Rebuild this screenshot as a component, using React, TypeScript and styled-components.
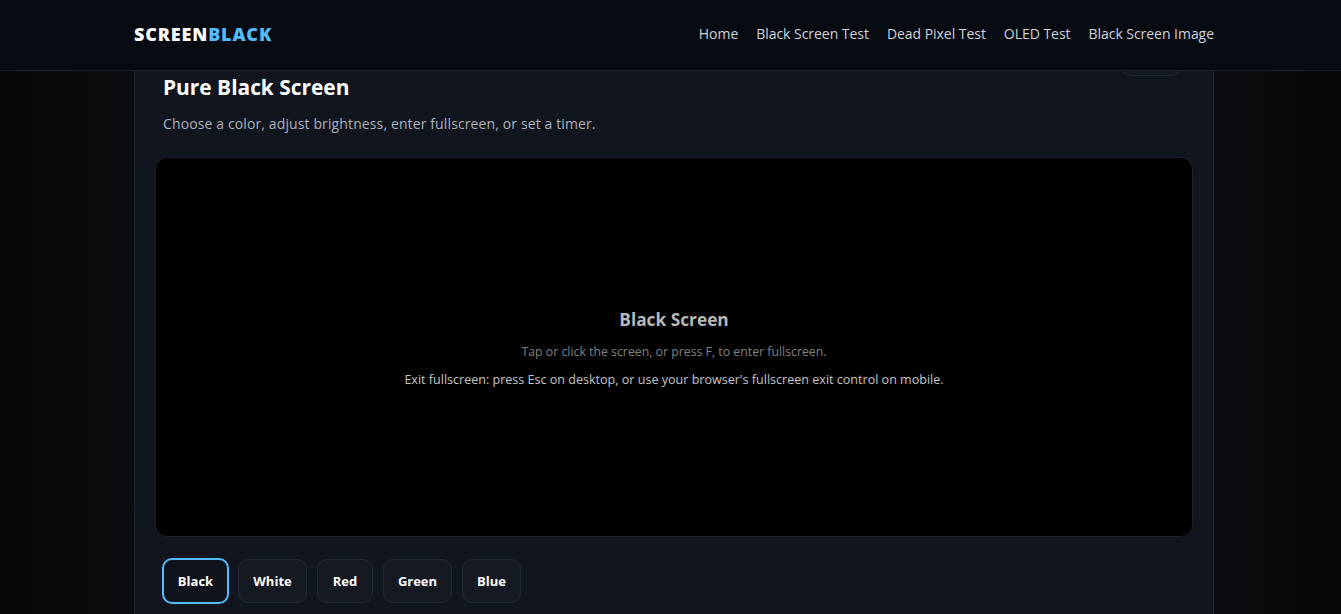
import styled, { createGlobalStyle } from 'styled-components';

const GlobalStyle = createGlobalStyle`
  * {
    box-sizing: border-box;
  }

  html,
  body {
    margin: 0;
    height: 100%;
    overflow: hidden;
    background: #000;
  }

  body {
    font-family: 'Open Sans', 'Noto Sans', sans-serif;
    color: #fff;
  }
`;

const Page = styled.div`
  height: 614px;
  overflow: hidden;
  background: linear-gradient(90deg, #07080a 0%, #0a0b0e 10%, #0a0b0e 92%, #060709 100%);
`;

const Header = styled.header`
  position: relative;
  z-index: 2;
  height: 71px;
  background: #060a11;
  border-bottom: 1px solid #1c212a;
`;

const HeaderInner = styled.div`
  width: 1080px;
  height: 100%;
  margin-left: 134px;
  display: flex;
  align-items: center;
  justify-content: space-between;
`;

const Logo = styled.a`
  padding-bottom: 3px;
  font-size: 18px;
  font-weight: 800;
  letter-spacing: 0.85px;
  color: #fff;
`;

const LogoAccent = styled.span`
  color: #55bcff;
`;

const Nav = styled.nav`
  display: flex;
  gap: 18px;
  padding-bottom: 4px;
`;

const NavLink = styled.a`
  font-size: 14px;
  letter-spacing: -0.04px;
  color: #cfd4dc;
`;

const Main = styled.main`
  width: 1080px;
  margin: -40px 0 0 134px;
`;

const Card = styled.section`
  height: 620px;
  padding: 6px 20px 0;
  background: #11151d;
  border: 1px solid #1f2530;
  border-radius: 16px;
`;

const CardHead = styled.div`
  display: flex;
  justify-content: space-between;
  align-items: flex-start;
  padding: 0 9px 0 8px;
`;

const TitleBlock = styled.div`
  padding-top: 35px;
`;

const Title = styled.h1`
  margin: 0;
  font-size: 20.9px;
  line-height: 28px;
  font-weight: 700;
  color: #fff;
`;

const Subtitle = styled.p`
  margin: 13px 0 0;
  font-size: 14px;
  line-height: 20px;
  letter-spacing: 0.12px;
  color: #aab2bf;
`;

const HeadButton = styled.button`
  width: 66px;
  height: 38px;
  padding: 0;
  background: #121720;
  border: 1px solid #222833;
  border-radius: 14px;
`;

const Screen = styled.div`
  height: 380px;
  margin-top: 23px;
  padding-top: 2px;
  display: flex;
  flex-direction: column;
  align-items: center;
  justify-content: center;
  background: #000;
  border: 1px solid #1c212a;
  border-radius: 12px;
  text-align: center;
`;

const ScreenTitle = styled.h2`
  margin: 0;
  font-size: 17.3px;
  line-height: 24px;
  font-weight: 700;
  color: #b8b8b8;
`;

const ScreenHint = styled.p`
  margin: 11px 0 0;
  font-size: 12.3px;
  line-height: 18px;
  color: #808080;
`;

const ScreenExit = styled.p`
  margin: 10px 0 0;
  font-size: 12.55px;
  line-height: 18px;
  font-weight: 500;
  color: #c4c4c4;
`;

const Swatches = styled.div`
  display: flex;
  align-items: center;
  gap: 10px;
  margin-top: 21px;
  padding-left: 7px;
`;

const Swatch = styled.button<{ $active?: boolean; $width: number }>`
  width: ${({ $width }) => $width}px;
  height: ${({ $active }) => ($active ? '46px' : '44px')};
  margin-right: ${({ $active }) => ($active ? '-1px' : '0')};
  padding: 0;
  font-family: inherit;
  font-size: 13px;
  font-weight: 700;
  color: #fff;
  background: ${({ $active }) => ($active ? '#0f141c' : '#141922')};
  border: ${({ $active }) => ($active ? '2px solid #55bcff' : '1px solid #222833')};
  border-radius: 10px;
`;

const navItems = ['Home', 'Black Screen Test', 'Dead Pixel Test', 'OLED Test', 'Black Screen Image'];
const colors = [
  { name: 'Black', width: 67 },
  { name: 'White', width: 69 },
  { name: 'Red', width: 56 },
  { name: 'Green', width: 69 },
  { name: 'Blue', width: 59 },
];

export default function App() {
  return (
    <Page>
      <GlobalStyle />
      <Header>
        <HeaderInner>
          <Logo>
            SCREEN<LogoAccent>BLACK</LogoAccent>
          </Logo>
          <Nav>
            {navItems.map(item => (
              <NavLink key={item}>{item}</NavLink>
            ))}
          </Nav>
        </HeaderInner>
      </Header>
      <Main>
        <Card>
          <CardHead>
            <TitleBlock>
              <Title>Pure Black Screen</Title>
              <Subtitle>Choose a color, adjust brightness, enter fullscreen, or set a timer.</Subtitle>
            </TitleBlock>
            <HeadButton aria-label="Menu" />
          </CardHead>
          <Screen>
            <ScreenTitle>Black Screen</ScreenTitle>
            <ScreenHint>Tap or click the screen, or press F, to enter fullscreen.</ScreenHint>
            <ScreenExit>
              Exit fullscreen: press Esc on desktop, or use your browser's fullscreen exit control on mobile.
            </ScreenExit>
          </Screen>
          <Swatches>
            {colors.map((color, i) => (
              <Swatch key={color.name} $active={i === 0} $width={color.width}>
                {color.name}
              </Swatch>
            ))}
          </Swatches>
        </Card>
      </Main>
    </Page>
  );
}
